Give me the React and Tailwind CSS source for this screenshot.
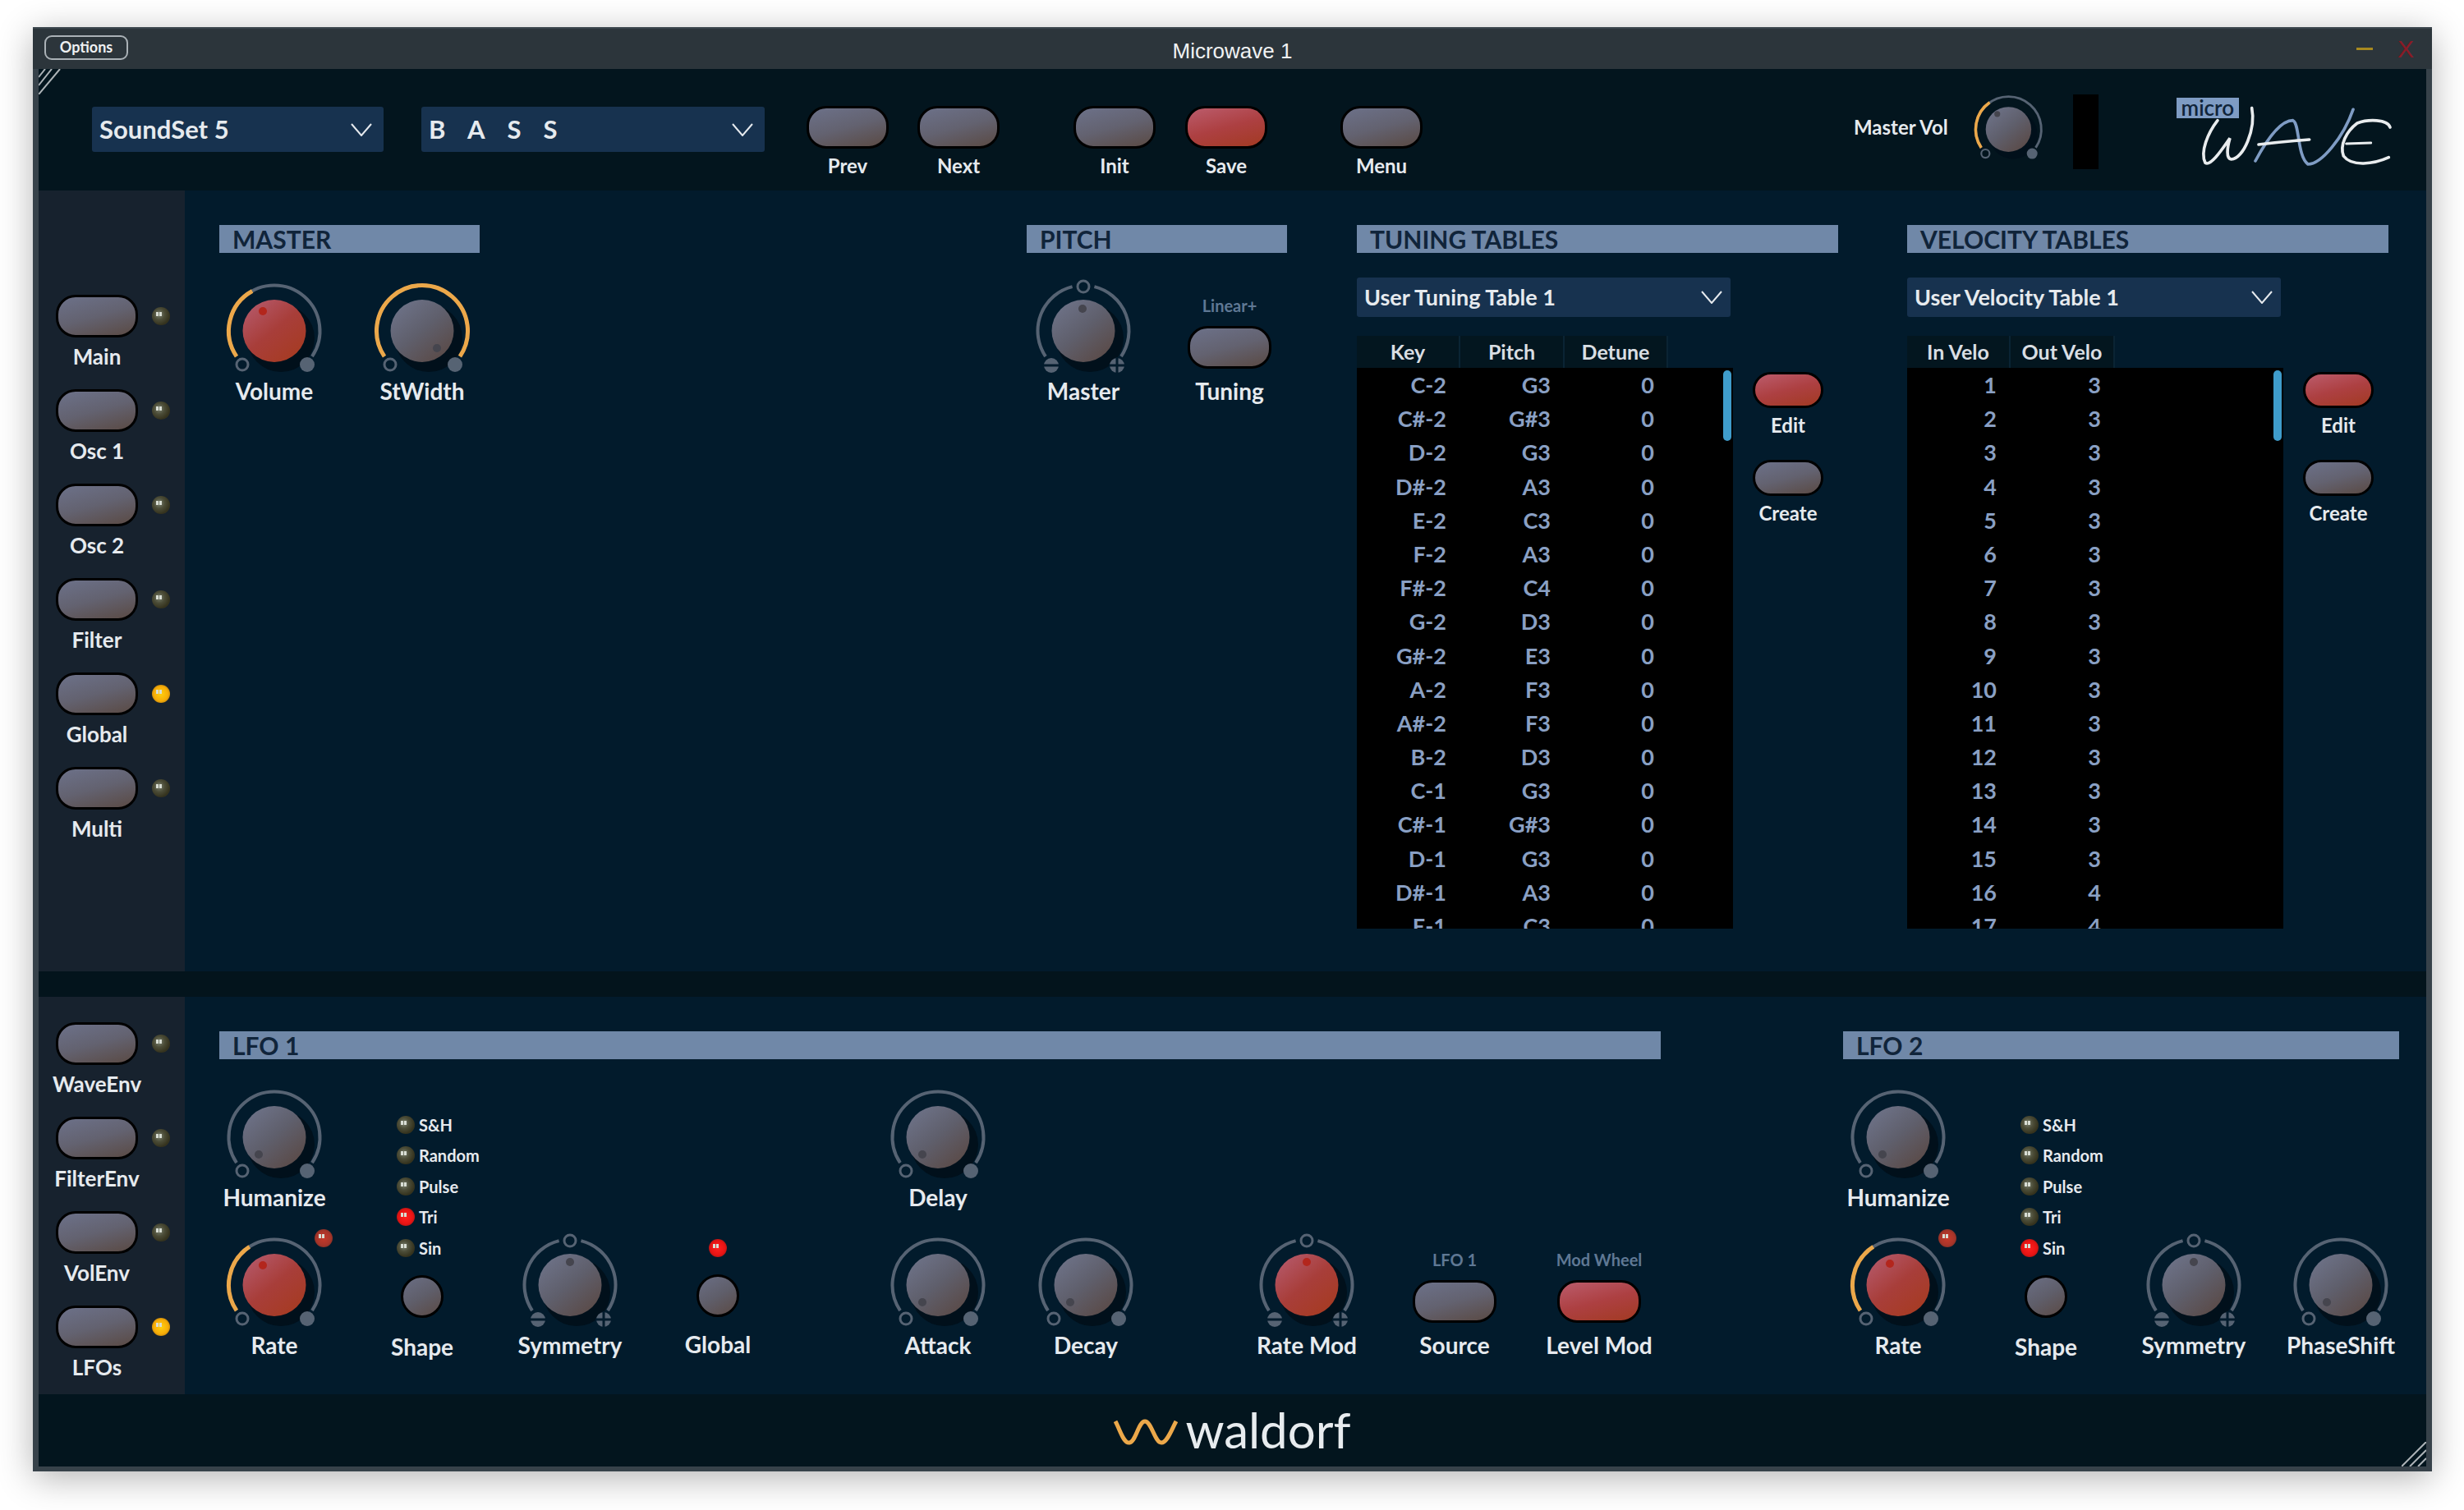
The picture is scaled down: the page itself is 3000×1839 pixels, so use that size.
import React from 'react';

const ARC = '#566373';

const polar = (r, deg) => {
    const a = (deg * Math.PI) / 180;
    return [r * Math.sin(a), -r * Math.cos(a)];
};

const arc = (r, from, to) => {
    const [x0, y0] = polar(r, from);
    const [x1, y1] = polar(r, to);
    const large = to - from > 180 ? 1 : 0;
    return `M${x0} ${y0} A${r} ${r} 0 ${large} 1 ${x1} ${y1}`;
};

const KnobSvg = ({ red, value, dot, bipolar, scale = 1 }) => (
    <svg width={140 * scale} height={129 * scale} viewBox="-70 -73 140 129" className="block">
        <defs>
            <linearGradient id="knob-grey" x1="0.1" y1="0.05" x2="0.85" y2="0.95">
                <stop offset="0" stopColor="#6e7389" />
                <stop offset="0.5" stopColor="#5f5f6c" />
                <stop offset="1" stopColor="#5a4a47" />
            </linearGradient>
            <linearGradient id="knob-red" x1="0.1" y1="0.05" x2="0.85" y2="0.95">
                <stop offset="0" stopColor="#b5596a" />
                <stop offset="0.5" stopColor="#a83e3a" />
                <stop offset="1" stopColor="#a63b22" />
            </linearGradient>
        </defs>
        <ellipse cx="8" cy="9" rx="41" ry="41" fill="#01101b" />
        {bipolar ? (
            <>
                <path d={arc(55.5, -124, -14)} fill="none" stroke={ARC} strokeWidth="4" />
                <path d={arc(55.5, 14, 124)} fill="none" stroke={ARC} strokeWidth="4" />
                <circle cx="0" cy="-54" r="7" fill="none" stroke={ARC} strokeWidth="3" />
                <circle cx="-39" cy="42" r="9" fill={ARC} />
                <rect x="-49" y="40.5" width="20" height="3" fill="#021b2c" />
                <circle cx="41" cy="42" r="9" fill={ARC} />
                <rect x="31" y="40.5" width="20" height="3" fill="#021b2c" />
                <rect x="39.5" y="32" width="3" height="20" fill="#021b2c" />
            </>
        ) : (
            <>
                <path d={arc(55.5, -124, 124)} fill="none" stroke={ARC} strokeWidth="4" />
                {value != null && <path d={arc(55.5, -124, value)} fill="none" stroke="#eca84a" strokeWidth="5" />}
                <circle cx="-39" cy="41" r="7" fill="none" stroke={ARC} strokeWidth="3" />
                <circle cx="40" cy="41" r="9" fill={ARC} />
            </>
        )}
        <ellipse cx="0" cy="0" rx="38.5" ry="38" fill={red ? 'url(#knob-red)' : 'url(#knob-grey)'} />
        <circle cx={dot[0]} cy={dot[1]} r="5" fill={red ? '#b3261c' : '#45454e'} />
    </svg>
);

const Knob = ({ label, red, value, dot = [-19, 21], bipolar, led }) => (
    <div className="relative w-[180px] h-[180px] shrink-0 flex flex-col items-center">
        <KnobSvg red={red} value={value} dot={dot} bipolar={bipolar} />
        <span className="h-[34px] leading-[34px] text-[28px] font-bold text-[#e6eaee] whitespace-nowrap">{label}</span>
        {led && (
            <div className="absolute left-[139px] top-[5px]">
                <Led kind="dim" />
            </div>
        )}
    </div>
);

const Led = ({ kind = 'off', className = '' }) => {
    const colors = {
        off: 'bg-[radial-gradient(circle_at_40%_40%,#7d8473_0%,#4c4d38_35%,#34321d_70%,#5e4a25_100%)]',
        red: 'bg-[radial-gradient(circle_at_50%_50%,#ff2020_0%,#e81414_55%,#7a1512_100%)]',
        dim: 'bg-[radial-gradient(circle_at_50%_50%,#c5392a_0%,#a8352a_55%,#5c2a20_100%)]',
        orange: 'bg-[radial-gradient(circle_at_50%_50%,#ffcf10_0%,#f7ad08_55%,#8a5a10_100%)]',
    };
    return (
        <div className={`relative w-[22px] h-[22px] rounded-full shrink-0 ${colors[kind]} ${className}`}>
            <span className="absolute left-[5px] top-[6px] w-[3px] h-[5px] bg-[#d8ddd4]"></span>
            <span className="absolute left-[9px] top-[6px] w-[3px] h-[5px] bg-[#d8ddd4]"></span>
        </div>
    );
};

const Button = ({ red, className = 'w-[100px] h-[52px]' }) => (
    <div
        className={`shrink-0 rounded-[24px] border-[3px] border-black ${
            red
                ? 'bg-[linear-gradient(165deg,#bb5c6c_0%,#ad4042_50%,#a23a22_100%)]'
                : 'bg-[linear-gradient(165deg,#6c7189_0%,#636270_50%,#5a4a44_100%)]'
        } ${className}`}
    ></div>
);

const SmallKnob = () => (
    <div className="w-[52px] h-[52px] rounded-full border-[3px] border-black bg-[linear-gradient(150deg,#6a6e84_0%,#5f5e6a_50%,#5b4a45_100%)]"></div>
);

const SideItem = ({ label, led }) => (
    <div className="h-[115px] pl-[21px]">
        <div className="flex items-center">
            <Button />
            <Led kind={led} className="ml-[17px]" />
        </div>
        <div className="w-[100px] flex justify-center mt-[7px] h-[32px] leading-[32px] text-[26px] font-bold text-[#e6eaee] whitespace-nowrap">{label}</div>
    </div>
);

const SectionBar = ({ title, className }) => (
    <div className={`h-[34px] bg-[#7088a8] pl-[16px] text-[30px] leading-[34px] font-bold text-[#10243a] ${className}`}>{title}</div>
);

const Chevron = () => (
    <svg width="26" height="16" viewBox="0 0 26 16" fill="none" stroke="#e6eaee" strokeWidth="2">
        <polyline points="1,1 13,15 25,1" />
    </svg>
);

const Dropdown = ({ children, className, textClass = 'text-[31px] pl-[9px]', chevronClass = 'mr-[14px]' }) => (
    <div className={`flex items-center justify-between bg-[#17324f] rounded-[3px] ${className}`}>
        <span className={`font-bold text-[#e6eaee] whitespace-nowrap ${textClass}`}>{children}</span>
        <div className={chevronClass}>
            <Chevron />
        </div>
    </div>
);

const TableSection = ({ title, dropdown, columns, rows }) => (
    <div className="w-[586px] shrink-0">
        <SectionBar title={title} className="w-full" />
        <Dropdown
            className="mt-[30px] w-[455px] h-[48px]"
            textClass="text-[27px] pl-[9px]"
            chevronClass="mr-[10px]"
        >
            {dropdown}
        </Dropdown>
        <div className="flex mt-[23px] h-[39px]">
            {columns.map((c) => (
                <div
                    key={c}
                    className={`${c === 'Pitch' || c === 'Out Velo' ? 'w-[127px]' : 'w-[126px]'} bg-[#03161f] border-r-2 border-[#0a2434] text-center text-[25px] leading-[39px] font-bold text-[#d9dee3] whitespace-nowrap`}
                >
                    {c}
                </div>
            ))}
        </div>
        <div className="flex">
            <div className="relative w-[458px] h-[683px] bg-black overflow-hidden shrink-0">
                {rows.map((r, i) => (
                    <div key={i} className="flex h-[41.2px] leading-[41.2px] text-[27px] font-bold text-[#8aa0c4]">
                        {r.map((v, j) => (
                            <div key={j} className={`${j === 1 ? 'w-[127px]' : 'w-[126px]'} pr-[17px] text-right`}>
                                {v}
                            </div>
                        ))}
                    </div>
                ))}
                <div className="absolute right-[2px] top-[3px] w-[10px] h-[86px] rounded-full bg-[#3f9ccb]"></div>
            </div>
            <div className="ml-[17px] w-[100px] pt-[5px] flex flex-col items-center">
                <Button red className="w-[86px] h-[44px]" />
                <div className="h-[41px] leading-[41px] text-[24px] font-bold text-[#e6eaee]">Edit</div>
                <Button className="w-[86px] h-[44px] mt-[22px]" />
                <div className="h-[41px] leading-[41px] text-[24px] font-bold text-[#e6eaee]">Create</div>
            </div>
        </div>
    </div>
);

const ShapeList = ({ active }) => (
    <div className="w-[180px] shrink-0 h-[360px] pt-[39px]">
        <div className="pl-[59px]">
            {['S&H', 'Random', 'Pulse', 'Tri', 'Sin'].map((s) => (
                <div key={s} className="flex items-center h-[37.5px]">
                    <Led kind={s === active ? 'red' : 'off'} />
                    <span className="ml-[5px] text-[20px] font-bold text-[#e6eaee]">{s}</span>
                </div>
            ))}
        </div>
        <div className="flex flex-col items-center mt-[14px]">
            <SmallKnob />
            <span className="mt-[18px] h-[34px] leading-[34px] text-[28px] font-bold text-[#e6eaee]">Shape</span>
        </div>
    </div>
);

const keys = ['C-2', 'C#-2', 'D-2', 'D#-2', 'E-2', 'F-2', 'F#-2', 'G-2', 'G#-2', 'A-2', 'A#-2', 'B-2', 'C-1', 'C#-1', 'D-1', 'D#-1', 'E-1'];
const pitches = ['G3', 'G#3', 'G3', 'A3', 'C3', 'A3', 'C4', 'D3', 'E3', 'F3', 'F3', 'D3', 'G3', 'G#3', 'G3', 'A3', 'C3'];
const tuningRows = keys.map((k, i) => [k, pitches[i], '0']);
const velocityRows = keys.map((_, i) => [String(i + 1), i < 15 ? '3' : '4']);

const WaveLogo = () => (
    <div className="relative w-[350px] h-[142px] shrink-0">
        <svg width="350" height="142" viewBox="0 0 1050 426" className="block" fill="none" strokeLinecap="round">
            <path d="M300 170 C265 215 235 285 255 325 C275 340 320 270 345 235 C335 270 330 310 350 312 C395 310 440 200 425 125" stroke="#e9ecee" strokeWidth="11" />
            <path d="M438 318 C480 240 530 170 575 170 C600 180 590 300 630 330 C680 330 760 230 795 130" stroke="#7f9cc4" strokeWidth="11" />
            <path d="M450 258 C500 252 570 245 635 240" stroke="#e9ecee" strokeWidth="11" />
            <path d="M930 195 C920 165 850 165 810 180 C770 210 745 260 760 300 C790 340 870 330 925 305" stroke="#e9ecee" strokeWidth="11" />
            <path d="M770 255 L860 252" stroke="#e9ecee" strokeWidth="9" />
        </svg>
        <div className="absolute left-[50px] top-[29px] w-[76px] h-[25px] bg-[#7f9cc4] text-[#10243a] text-[26px] font-semibold leading-[24px] text-center">micro</div>
    </div>
);

export default function App() {
    return (
        <div className="w-[3000px] h-[1839px] bg-white overflow-hidden pt-[33px] pl-[40px] font-[Lato,sans-serif]">
            <div className="relative w-[2921px] h-[1759px] flex flex-col bg-[#37424a] px-[7px] pb-[6px] shadow-[0_8px_40px_rgba(0,0,0,0.3)]">
                {/* title bar */}
                <div className="relative h-[51px] -mx-[7px] shrink-0 flex items-center bg-[#2c353b] border-t-2 border-[#3a454c]">
                    <div className="ml-[14px] -mt-[4px] w-[102px] h-[30px] rounded-[9px] border-2 border-[#aab1b6] text-center text-[18px] leading-[25px] font-bold text-[#eef0f2]">Options</div>
                    <div className="absolute left-[1394px] top-[8px] w-[133px] flex justify-center whitespace-nowrap text-[26px] text-[#f0f2f3] font-['Liberation_Sans',sans-serif]">Microwave 1</div>
                    <div className="ml-auto w-[20px] h-[3px] bg-[#a8891f]"></div>
                    <div className="ml-[30px] mr-[22px] text-[30px] leading-none text-[#8a1a25] font-['Liberation_Sans',sans-serif]">X</div>
                </div>

                {/* top strip */}
                <div className="relative h-[148px] shrink-0 flex items-start bg-[#03151e]">
                    <svg width="28" height="31" viewBox="0 0 28 31" className="absolute left-0 top-0" stroke="#aeb4b8" strokeWidth="2">
                        <line x1="0" y1="10" x2="8" y2="0" />
                        <line x1="0" y1="20" x2="16" y2="0" />
                        <line x1="0" y1="31" x2="26" y2="0" />
                    </svg>
                    <Dropdown className="ml-[65px] mt-[46px] w-[355px] h-[55px] shrink-0">SoundSet 5</Dropdown>
                    <Dropdown className="ml-[46px] mt-[46px] w-[418px] h-[55px] shrink-0" textClass="text-[31px] pl-[9px] tracking-[27px]">BASS</Dropdown>
                    <div className="flex ml-[51px] mt-[45px] shrink-0">
                        {[
                            ['Prev', false, 'ml-0'],
                            ['Next', false, 'ml-[35px]'],
                            ['Init', false, 'ml-[90px]'],
                            ['Save', true, 'ml-[36px]'],
                            ['Menu', false, 'ml-[89px]'],
                        ].map(([l, red, ml]) => (
                            <div key={l} className={`flex flex-col items-center ${ml}`}>
                                <Button red={red} />
                                <span className="h-[42px] leading-[42px] text-[24px] font-bold text-[#e6eaee]">{l}</span>
                            </div>
                        ))}
                    </div>
                    <div className="ml-[525px] mt-[51px] w-[114px] shrink-0 text-[24px] leading-[40px] font-bold text-[#e6eaee] whitespace-nowrap">Master Vol</div>
                    <div className="ml-[24px] mt-[21px] shrink-0">
                        <KnobSvg value={-35} dot={[-19, -26]} scale={0.72} />
                    </div>
                    <div className="ml-[28px] mt-[31px] w-[31px] h-[91px] shrink-0 bg-black"></div>
                    <div className="ml-[45px] mt-[6px] shrink-0">
                        <WaveLogo />
                    </div>
                </div>

                {/* upper panel */}
                <div className="h-[951px] shrink-0 flex bg-[#021b2c]">
                    <div className="w-[178px] shrink-0 bg-[#17222e] pt-[127px]">
                        <SideItem label="Main" />
                        <SideItem label="Osc 1" />
                        <SideItem label="Osc 2" />
                        <SideItem label="Filter" />
                        <SideItem label="Global" led="orange" />
                        <SideItem label="Multi" />
                    </div>
                    <div className="flex pl-[42px] pt-[42px]">
                        <div className="w-[317px] shrink-0">
                            <SectionBar title="MASTER" className="w-full" />
                            <div className="flex -ml-[23px] mt-[22px]">
                                <Knob label="Volume" red value={-29} dot={[-14, -24]} />
                                <Knob label="StWidth" value={124} dot={[18, 21]} />
                            </div>
                        </div>
                        <div className="w-[317px] shrink-0 ml-[666px]">
                            <SectionBar title="PITCH" className="w-full" />
                            <div className="flex -ml-[21px] mt-[22px]">
                                <Knob label="Master" bipolar dot={[-1, -27]} />
                                <div className="w-[180px] shrink-0 -ml-[2px] flex flex-col items-center">
                                    <span className="mt-[28px] h-[28px] leading-[28px] text-[20px] font-bold text-[#5f7894]">Linear+</span>
                                    <Button className="w-[102px] h-[52px] mt-[11px]" />
                                    <span className="mt-[10px] h-[34px] leading-[34px] text-[28px] font-bold text-[#e6eaee]">Tuning</span>
                                </div>
                            </div>
                        </div>
                        <div className="ml-[85px]">
                            <TableSection title="TUNING TABLES" dropdown="User Tuning Table 1" columns={['Key', 'Pitch', 'Detune']} rows={tuningRows} />
                        </div>
                        <div className="ml-[84px]">
                            <TableSection title="VELOCITY TABLES" dropdown="User Velocity Table 1" columns={['In Velo', 'Out Velo']} rows={velocityRows} />
                        </div>
                    </div>
                </div>

                <div className="h-[31px] shrink-0 bg-[#03141c]"></div>

                {/* lower panel */}
                <div className="h-[484px] shrink-0 flex bg-[#021b2c]">
                    <div className="w-[178px] shrink-0 bg-[#17222e] pt-[31px]">
                        <SideItem label="WaveEnv" />
                        <SideItem label="FilterEnv" />
                        <SideItem label="VolEnv" />
                        <SideItem label="LFOs" led="orange" />
                    </div>
                    <div className="flex pl-[42px] pt-[42px]">
                        <div className="w-[1755px] shrink-0">
                            <SectionBar title="LFO 1" className="w-full" />
                            <div className="flex -ml-[23px] mt-[22px]">
                                <div className="w-[180px] shrink-0">
                                    <Knob label="Humanize" />
                                    <Knob label="Rate" red value={-33} dot={[-14, -24]} led />
                                </div>
                                <ShapeList active="Tri" />
                                <div className="w-[180px] shrink-0 pt-[180px]">
                                    <Knob label="Symmetry" bipolar dot={[0, -28]} />
                                </div>
                                <div className="w-[180px] shrink-0 pt-[197px] flex flex-col items-center">
                                    <Led kind="red" />
                                    <div className="mt-[21px]">
                                        <SmallKnob />
                                    </div>
                                    <span className="mt-[16px] h-[34px] leading-[34px] text-[28px] font-bold text-[#e6eaee]">Global</span>
                                </div>
                                <div className="w-[180px] shrink-0 ml-[88px]">
                                    <Knob label="Delay" />
                                    <Knob label="Attack" />
                                </div>
                                <div className="w-[180px] shrink-0 pt-[180px]">
                                    <Knob label="Decay" />
                                </div>
                                <div className="w-[180px] shrink-0 ml-[89px] pt-[180px]">
                                    <Knob label="Rate Mod" red bipolar dot={[0, -28]} />
                                </div>
                                <div className="w-[180px] shrink-0 pt-[208px] flex flex-col items-center">
                                    <span className="h-[28px] leading-[28px] text-[20px] font-bold text-[#5f7894]">LFO 1</span>
                                    <Button className="w-[102px] h-[52px] mt-[11px]" />
                                    <span className="mt-[10px] h-[34px] leading-[34px] text-[28px] font-bold text-[#e6eaee]">Source</span>
                                </div>
                                <div className="w-[180px] shrink-0 -ml-[4px] pt-[208px] flex flex-col items-center">
                                    <span className="h-[28px] leading-[28px] text-[20px] font-bold text-[#5f7894]">Mod Wheel</span>
                                    <Button red className="w-[102px] h-[52px] mt-[11px]" />
                                    <span className="mt-[10px] h-[34px] leading-[34px] text-[28px] font-bold text-[#e6eaee]">Level Mod</span>
                                </div>
                            </div>
                        </div>
                        <div className="w-[677px] shrink-0 ml-[222px]">
                            <SectionBar title="LFO 2" className="w-full" />
                            <div className="flex -ml-[23px] mt-[22px]">
                                <div className="w-[180px] shrink-0">
                                    <Knob label="Humanize" />
                                    <Knob label="Rate" red value={-33} dot={[-10, -26]} led />
                                </div>
                                <ShapeList active="Sin" />
                                <div className="w-[180px] shrink-0 pt-[180px]">
                                    <Knob label="Symmetry" bipolar dot={[0, -28]} />
                                </div>
                                <div className="w-[180px] shrink-0 -ml-[1px] pt-[180px]">
                                    <Knob label="PhaseShift" dot={[-17, 21]} />
                                </div>
                            </div>
                        </div>
                    </div>
                </div>

                {/* footer */}
                <div className="relative flex-1 flex items-center justify-center bg-[#03151e] -translate-y-0">
                    <svg width="78" height="32" viewBox="0 0 78 32" fill="none" stroke="#eca84a" strokeWidth="5" className="mr-[9px] mt-[4px]">
                        <path d="M2 3 C8 14 12 30 19 29 C27 28 30 3 38 3 C46 3 50 29 58 29 C65 29 70 14 76 3" />
                    </svg>
                    <span className="text-[60px] leading-none text-[#e8ecef] -mt-[3px]">waldorf</span>
                    <svg width="30" height="30" viewBox="0 0 30 30" className="absolute right-0 bottom-0" stroke="#aeb4b8" strokeWidth="2">
                        <line x1="30" y1="0" x2="0" y2="30" />
                        <line x1="30" y1="10" x2="10" y2="30" />
                        <line x1="30" y1="20" x2="20" y2="30" />
                    </svg>
                </div>
            </div>
        </div>
    );
}
